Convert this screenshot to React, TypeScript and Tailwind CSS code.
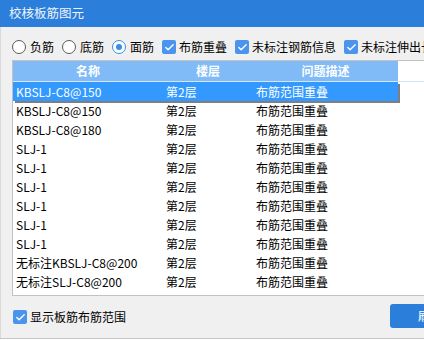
import { Check } from 'lucide-react';

const rows = [
  { name: 'KBSLJ-C8@150', floor: '第2层', issue: '布筋范围重叠' },
  { name: 'KBSLJ-C8@150', floor: '第2层', issue: '布筋范围重叠' },
  { name: 'KBSLJ-C8@180', floor: '第2层', issue: '布筋范围重叠' },
  { name: 'SLJ-1', floor: '第2层', issue: '布筋范围重叠' },
  { name: 'SLJ-1', floor: '第2层', issue: '布筋范围重叠' },
  { name: 'SLJ-1', floor: '第2层', issue: '布筋范围重叠' },
  { name: 'SLJ-1', floor: '第2层', issue: '布筋范围重叠' },
  { name: 'SLJ-1', floor: '第2层', issue: '布筋范围重叠' },
  { name: 'SLJ-1', floor: '第2层', issue: '布筋范围重叠' },
  { name: '无标注KBSLJ-C8@200', floor: '第2层', issue: '布筋范围重叠' },
  { name: '无标注SLJ-C8@200', floor: '第2层', issue: '布筋范围重叠' },
];

function Radio({ label, checked }: { label: string; checked?: boolean }) {
  return (
    <label className="flex items-center gap-[4px] shrink-0">
      <span
        className={`flex items-center justify-center w-[14px] h-[14px] rounded-full border bg-white ${
          checked ? 'border-[#3a8ee6]' : 'border-[#5a5a5a]'
        }`}
      >
        {checked && <span className="w-[6px] h-[6px] rounded-full bg-[#3a8ee6]" />}
      </span>
      <span>{label}</span>
    </label>
  );
}

function CheckBox({ label }: { label: string }) {
  return (
    <label className="flex items-center gap-[3px] shrink-0">
      <span className="flex items-center justify-center w-[14px] h-[14px] rounded-[2px] bg-[#4a94ee]">
        <Check size={11} strokeWidth={3} className="text-white" />
      </span>
      <span>{label}</span>
    </label>
  );
}

export default function App() {
  return (
    <div
      className="w-[424px] h-[340px] overflow-hidden bg-white text-[12px] text-black"
      style={{ fontFamily: '"Noto Sans CJK SC", "Noto Sans", sans-serif' }}
    >
      <div className="w-[560px] h-[339px] flex flex-col border-b border-[#c4c4c4]">
        {/* Title bar */}
        <div className="h-[27px] shrink-0 bg-[#2b7fdb] flex items-center pl-[9px]">
          <span className="text-[12.5px] text-[#eef4fc]">校核板筋图元</span>
        </div>

        <div className="flex-1 flex flex-col bg-[#f0f0f0] border-l border-[#dadada] pl-[11px]">
          {/* Options */}
          <div className="h-[33px] flex items-center gap-[8px] pt-[7px]">
            <Radio label="负筋" />
            <Radio label="底筋" />
            <Radio label="面筋" checked />
            <CheckBox label="布筋重叠" />
            <CheckBox label="未标注钢筋信息" />
            <CheckBox label="未标注伸出长度" />
          </div>

          {/* Table */}
          <div className="h-[236px] border border-[#c2c2c2] bg-white flex flex-col">
            <div className="flex h-[21px] shrink-0 border-b border-[#d4e6fa]">
              <div className="w-[385px] flex bg-[#80bbf7] text-white font-bold">
                <div className="w-[150px] flex items-center justify-center">名称</div>
                <div className="w-[90px] flex items-center justify-center">楼层</div>
                <div className="w-[145px] flex items-center justify-center">问题描述</div>
              </div>
            </div>
            {rows.map((r, i) => (
              <div
                key={i}
                className={`w-[385px] h-[19px] shrink-0 flex items-center ${
                  i === 0 ? 'bg-[#3399ff] text-white shadow-[2px_2px_0_#7f7f7f]' : ''
                }`}
              >
                <div className="w-[150px] pl-[3px] whitespace-nowrap">{r.name}</div>
                <div className="w-[90px] pl-[3px]">{r.floor}</div>
                <div className="w-[145px] pl-[3px]">{r.issue}</div>
              </div>
            ))}
          </div>

          {/* Footer */}
          <div className="flex-1 flex items-center justify-between pr-[10px]">
            <div className="pl-[1px]">
              <CheckBox label="显示板筋布筋范围" />
            </div>
            <button className="w-[160px] h-[24px] rounded-[3px] bg-[#2b7fdb] text-white text-[12px] text-left pl-[28px] -mt-[3px]">
              刷新
            </button>
          </div>
        </div>
      </div>
    </div>
  );
}
